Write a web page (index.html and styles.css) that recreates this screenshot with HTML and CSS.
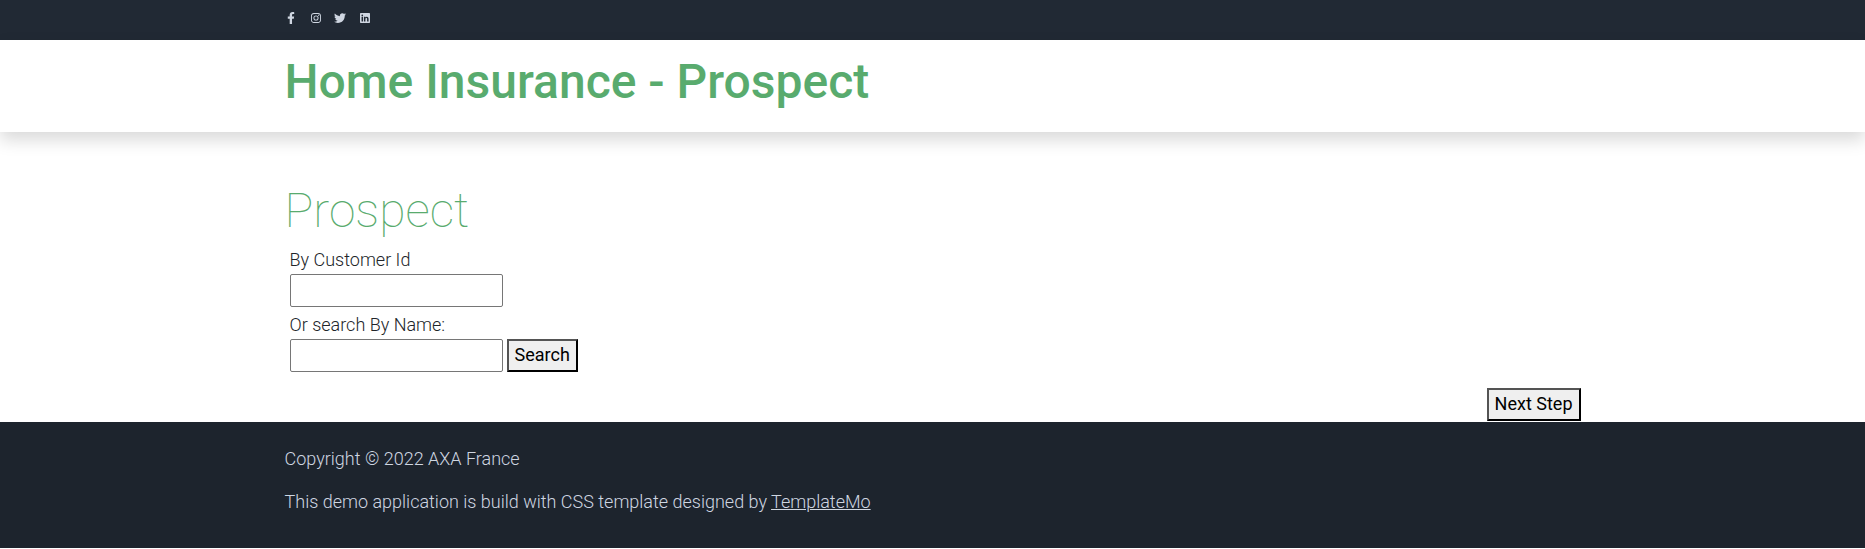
FILE: index.html
```html
<!DOCTYPE html>
<html lang="en">
<head>
<meta charset="utf-8">
<title>Home Insurance - Prospect</title>
<link rel="stylesheet" href="styles.css">
</head>
<body>
<nav class="topbar">
  <div class="container">
    <div class="social">
      <a href="#" aria-label="Facebook"><svg class="icon icon-narrow" viewBox="0 0 320 512"><path d="M279 288l14-93h-89v-60c0-25 12-50 52-50h41V7s-37-7-72-7c-73 0-121 44-121 125v70H23v93h81v224h100V288z"/></svg></a>
      <a href="#" aria-label="Instagram"><svg class="icon" viewBox="0 0 448 512"><path fill-rule="evenodd" d="M132 32h184c76 0 132 56 132 132v184c0 76-56 132-132 132H132C56 480 0 424 0 348V164C0 88 56 32 132 32zm6 41c-60 0-97 37-97 97v172c0 60 37 97 97 97h172c60 0 97-37 97-97V170c0-60-37-97-97-97zm86 68a115 115 0 1 1 0 230 115 115 0 0 1 0-230zm0 40a75 75 0 1 0 0 150 75 75 0 0 0 0-150zm120-72a27 27 0 1 1 0 54 27 27 0 0 1 0-54z"/></svg></a>
      <a href="#" aria-label="Twitter"><svg class="icon icon-wide" viewBox="0 0 512 512"><path d="M459 152c0 4 0 9 0 14 0 138-105 298-298 298-59 0-114-17-161-47 8 1 16 1 25 1 49 0 94-16 130-45-46-1-85-31-98-73 6 1 13 2 20 2 9 0 19-1 28-4-48-10-84-52-84-103v-1c14 8 30 13 47 13-28-19-46-51-46-87 0-19 5-37 14-53 52 64 129 105 216 110-2-8-3-16-3-24 0-58 47-105 105-105 30 0 57 13 77 33 24-5 46-13 66-25-8 24-24 45-46 58 21-2 42-8 61-16-14 21-32 39-53 54z"/></svg></a>
      <a href="#" aria-label="LinkedIn"><svg class="icon" viewBox="0 0 448 512"><path fill-rule="evenodd" d="M32 32h384c18 0 32 15 32 33v382c0 18-14 33-32 33H32c-18 0-32-15-32-33V65c0-18 14-33 32-33zm37 170v214h66V202zm33-106a38 38 0 1 0 0 77 38 38 0 0 0 0-77zm282 203c0-58-12-102-80-102-32 0-54 18-63 34h-1v-29h-64v214h67V310c0-28 5-55 40-55 34 0 34 32 34 57v104h67z"/></svg></a>
    </div>
  </div>
</nav>
<header class="header">
  <div class="container"><h1 class="title brand">Home Insurance - Prospect</h1></div>
</header>
<main class="container main">
  <h2 class="title section-title">Prospect</h2>
  <form class="search">
    <label for="customer-id">By Customer Id</label>
    <input class="field" id="customer-id" type="text">
    <label for="customer-name">Or search By Name:</label>
    <div class="row">
      <input class="field" id="customer-name" type="text">
      <button class="button" type="button">Search</button>
    </div>
  </form>
  <div class="actions"><button class="button" type="button">Next Step</button></div>
</main>
<footer class="footer">
  <div class="container">
    <p>Copyright © 2022 AXA France</p>
    <p>This demo application is build with CSS template designed by <a href="#">TemplateMo</a></p>
  </div>
</footer>
</body>
</html>
```
FILE: styles.css
```css
*, *::before, *::after { box-sizing: border-box; }

body {
  margin: 0;
  background: #fff;
  color: #212529;
  font-family: Roboto, sans-serif;
  font-size: 18px;
  font-weight: 300;
  line-height: 27px;
}

.container {
  width: 100%;
  max-width: 1320px;
  margin: 0 auto;
  padding: 0 12px;
}

.topbar {
  padding: 12px 0 16px;
  background: #212934;
}

.social {
  display: flex;
  justify-content: space-between;
  width: 87px;
}

.social a {
  display: flex;
  justify-content: center;
  width: 13px;
  color: #cfd6e1;
}

.icon { width: 10px; height: 12px; fill: currentColor; }
.icon-narrow { width: 8px; }
.icon-wide { width: 12px; }

.header {
  padding: 13px 0 21px;
  box-shadow: 0 8px 16px rgba(0, 0, 0, 0.15);
}

.title {
  margin: 0;
  color: #59ab6e;
  font-size: 48px;
  line-height: 58px;
}

.brand { font-weight: 500; }

.main { padding-top: 50px; }

.section-title { font-weight: 100; margin-bottom: 6px; }

.search {
  display: flex;
  flex-direction: column;
  align-items: flex-start;
  padding: 0 5px;
}

.search label { margin-bottom: 1px; }

.search > .field { margin-bottom: 4px; }

.row { display: flex; gap: 4px; }

.field {
  width: 213px;
  height: 33px;
  padding: 1px 2px;
  border: 1px solid #767676;
  border-radius: 2px;
  background: #fff;
  font: inherit;
}

.button {
  padding: 0 6px 2px;
  border: 2px outset #000;
  background: #efefef;
  color: #000;
  font: inherit;
  font-weight: 400;
}

.actions {
  display: flex;
  justify-content: flex-end;
  padding: 16px 0 1px;
}

.footer {
  padding: 23px 0 17px;
  background: #1d242d;
  color: #cfd6e1;
}

.footer p { margin: 0 0 16px; }
.footer a { color: inherit; text-decoration: underline; }
```
